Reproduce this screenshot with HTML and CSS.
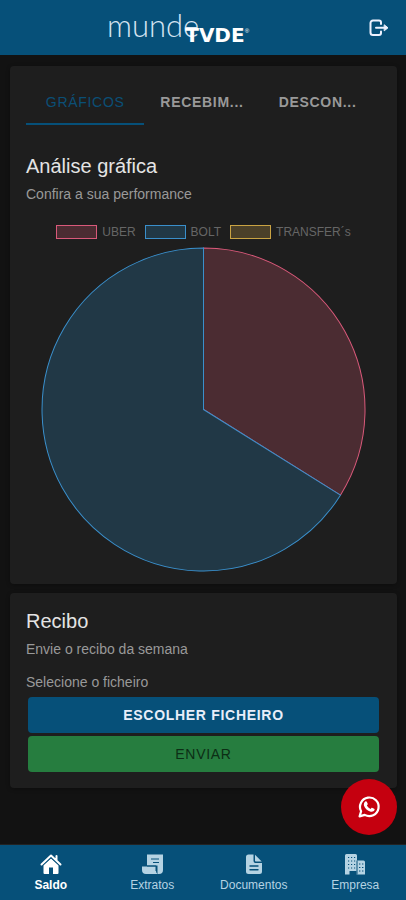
FILE: index.html
```html
<!DOCTYPE html>
<html lang="pt">
<head>
  <meta charset="UTF-8" />
  <meta name="viewport" content="width=device-width, initial-scale=1.0"/>
  <title>Saldo</title>
  <link rel="stylesheet" href="styles.css">
</head>
<body>
  <header class="header">
    <div class="logo"><span class="logo-thin">munde</span><span class="logo-bold">TVDE</span><span class="logo-reg">®</span></div>
    <button class="logout-btn" type="button" aria-label="Sair">
      <svg viewBox="0 0 22 20" width="22" height="20" fill="none" stroke="currentColor" stroke-width="2" stroke-linecap="round" stroke-linejoin="round">
        <path d="M13 6V4.500A2 2 0 0 0 11 2.500H5A2.500 2.500 0 0 0 2.500 5v9.500A2.500 2.500 0 0 0 5 17h6a2 2 0 0 0 2-2V13.500"/>
        <path d="M8 9.800H18"/>
        <path d="M16.500 7l3.500 2.800-3.500 2.800z" fill="currentColor" stroke-width="1"/>
      </svg>
    </button>
  </header>

  <main class="content">
    <section class="card card-chart">
      <div class="tabs" role="tablist">
        <button class="tab active" type="button" role="tab" aria-selected="true">GRÁFICOS</button>
        <button class="tab long" type="button" role="tab" aria-selected="false">RECEBIM...</button>
        <button class="tab long" type="button" role="tab" aria-selected="false">DESCON...</button>
      </div>
      <h2 class="card-title">Análise gráfica</h2>
      <p class="card-subtitle">Confira a sua performance</p>

      <ul class="legend">
        <li class="legend-item"><span class="swatch uber"></span>UBER</li>
        <li class="legend-item"><span class="swatch bolt"></span>BOLT</li>
        <li class="legend-item"><span class="swatch transfer"></span>TRANSFER´s</li>
      </ul>
      <div class="chart">
        <svg class="pie" viewBox="0 0 324 324">
          <path class="slice-uber" d="M162 162V1A161 161 0 0 1 298.500 247.400Z"/>
          <path class="slice-bolt" d="M162 162L298.500 247.400A161 161 0 1 1 162 1Z"/>
        </svg>
      </div>
    </section>

    <section class="card card-receipt">
      <h2 class="card-title">Recibo</h2>
      <p class="card-subtitle">Envie o recibo da semana</p>
      <label class="file-label" for="ficheiro">Selecione o ficheiro</label>
      <button class="btn choose-btn" type="button" id="ficheiro">ESCOLHER FICHEIRO</button>
      <button class="btn send-btn" type="button">ENVIAR</button>
    </section>
  </main>

  <button class="whatsapp-btn" type="button" aria-label="WhatsApp">
    <svg viewBox="0 0 24 24" width="24" height="24">
      <path d="M2.600 21.400l1.500-5.200A9.300 9.300 0 1 1 7.700 19.900z" fill="none" stroke="#fff" stroke-width="2.200" stroke-linejoin="round"/>
      <path d="M8.300 6.600c.5-.5 1.200-.4 1.500.2l.9 2c.2.400 0 .8-.8 1.700.8 1.600 2 2.700 3.700 3.500.7-.7 1-1.300 1.400-1.200l2.200 1c.5.300.5.700.3 1.300-.5 1.400-2.200 2-3.800 1.600-3.400-.9-5.600-3.100-6.700-5.900-.5-1.700.2-3.200 1.300-4.200z" fill="#fff"/>
    </svg>
  </button>

  <nav class="tab-bar">
    <a class="tab-link selected" href="#saldo">
      <svg viewBox="0 0 22 22" width="22" height="22" fill="currentColor">
        <path d="M11 5.500L3.500 12.200V20a1 1 0 0 0 1 1H9v-6.500h4V21h4.500a1 1 0 0 0 1-1v-7.800z"/>
        <path d="M1.500 11.500L11 2.500l9.500 9M16.500 7V3" fill="none" stroke="currentColor" stroke-width="2" stroke-linecap="round" stroke-linejoin="round"/>
        <path d="M3 12.300L11 5l8 7.300" fill="none" stroke="#065079" stroke-width="0.600"/>
      </svg>
      <span>Saldo</span>
    </a>
    <a class="tab-link" href="#extratos">
      <svg viewBox="0 0 22 22" width="22" height="22" fill="currentColor">
        <path d="M6 1.500h16V17a4 4 0 0 1-4 4h-1.500v-8.500H6z"/>
        <path d="M1 13.500h14V18a4 4 0 0 0 1.500 3H5a4 4 0 0 1-4-4z"/>
        <path d="M10 6h8M12 9.500h6M6 13h9v5" fill="none" stroke="#065079" stroke-width="1"/>
      </svg>
      <span>Extratos</span>
    </a>
    <a class="tab-link" href="#documentos">
      <svg viewBox="0 0 22 22" width="22" height="22" fill="currentColor">
        <path d="M10.500 1.500v6.500a2 2 0 0 0 2 2H19V18.500a2.500 2.500 0 0 1-2.500 2.500h-11A2.500 2.500 0 0 1 3 18.500V4a2.500 2.500 0 0 1 2.500-2.500z"/>
        <path d="M12 1.800v6c0 .4.300.700.700.700h6z"/>
        <path d="M7 13h8M7 16.800h8" stroke="#065079" stroke-width="1.400" stroke-linecap="round"/>
      </svg>
      <span>Documentos</span>
    </a>
    <a class="tab-link" href="#empresa">
      <svg viewBox="0 0 22 22" width="22" height="22" fill="currentColor">
        <path d="M2.500 1h9A1.500 1.500 0 0 1 13 2.500V7.500h6.500A1.500 1.500 0 0 1 21 9v12.500h-8.500V18h-7v3.500H1v-19A1.500 1.500 0 0 1 2.500 1z"/>
        <path d="M13 7.500v14M4 4.500h1.200M7 4.500h1.200M10 4.500h1.200M4 8h1.200M7 8h1.200M10 8h1.200M4 11.500h1.200M7 11.500h1.200M10 11.500h1.200M4 15h1.200M7 15h1.200M10 15h1.200M15 11h1.400M18 11h1.400M15 14.500h1.400M18 14.500h1.400M15 18h1.400M18 18h1.400" fill="none" stroke="#065079" stroke-width="1"/>
      </svg>
      <span>Empresa</span>
    </a>
  </nav>
</body>
</html>
```

FILE: styles.css
```css
body {
  margin: 0;
  min-height: 100vh;
  display: flex;
  flex-direction: column;
  background-color: #121212;
  color: #fff;
  font-family: "Liberation Sans", Arial, sans-serif;
}

button {
  border: none;
  padding: 0;
  font-family: inherit;
  cursor: pointer;
}

.header {
  display: flex;
  align-items: center;
  gap: 12px;
  height: 55px;
  padding-right: 16px;
  background-color: #065079;
}

.logo {
  flex: 1;
  display: flex;
  align-items: flex-end;
  justify-content: center;
}

.logo-thin {
  padding-bottom: 6px;
  color: #d5e4f2;
  font-family: Lato, sans-serif;
  font-size: 31px;
  font-weight: 300;
  line-height: 32px;
}

.logo-bold {
  margin-left: -14px;
  font-family: "DejaVu Sans", sans-serif;
  font-size: 20px;
  font-weight: bold;
  line-height: 24px;
}

.logo-reg {
  padding-bottom: 12px;
  font-size: 6px;
  line-height: 8px;
}

.logout-btn {
  display: flex;
  background: none;
  color: #eef2ff;
}

.content {
  flex: 1;
  display: flex;
  flex-direction: column;
  gap: 9px;
  padding: 11px 9px 11px 10px;
}

.card {
  padding: 16px;
  border-radius: 4px;
  background-color: #1e1e1e;
  box-shadow: 0 1px 4px rgba(0, 0, 0, 0.3);
}

.card-chart {
  padding-top: 12px;
  padding-bottom: 12px;
}

.tabs {
  display: flex;
  margin-bottom: 29px;
}

.tab {
  flex: 1;
  height: 47px;
  padding: 0 16px;
  border-top: 2px solid transparent;
  border-bottom: 2px solid transparent;
  background: none;
  color: #999;
  font-size: 14px;
  font-weight: bold;
  letter-spacing: 0.05em;
  white-space: nowrap;
}

.tab.long {
  text-align: left;
}

.tab.active {
  border-bottom-color: #065079;
  color: #0b4f76;
  font-weight: normal;
}

.card-title {
  margin: 0 0 6px;
  color: #e4e4e4;
  font-size: 20px;
  font-weight: normal;
  line-height: 24px;
}

.card-subtitle {
  margin: 0;
  color: #999;
  font-size: 14px;
  line-height: 20px;
}

.legend {
  display: flex;
  justify-content: center;
  gap: 9px;
  margin: 21px 0 8px;
  padding: 0;
  list-style: none;
  color: #666;
  font-size: 12px;
  line-height: 14px;
}

.legend-item {
  display: flex;
  align-items: center;
  gap: 5px;
}

.swatch {
  box-sizing: border-box;
  width: 41px;
  height: 14px;
  border: 1px solid;
}

.uber {
  border-color: #d9597a;
  background-color: #4b2c32;
}

.bolt {
  border-color: #3a8fcb;
  background-color: #213846;
}

.transfer {
  border-color: #c9a343;
  background-color: #4b4029;
}

.chart {
  padding: 0 15px;
}

.pie {
  display: block;
  width: 100%;
}

.slice-uber {
  fill: #4b2c32;
  stroke: #d9597a;
}

.slice-bolt {
  fill: #213846;
  stroke: #3a8fcb;
}

.card-receipt {
  display: flex;
  flex-direction: column;
}

.file-label {
  margin: 13px 0 3px;
  color: #999;
  font-size: 14px;
  line-height: 20px;
}

.btn {
  height: 36px;
  margin: 2px;
  border-radius: 4px;
  font-size: 14px;
  letter-spacing: 0.05em;
}

.choose-btn {
  background-color: #065079;
  color: #e8eefa;
  font-weight: bold;
}

.send-btn {
  margin-top: 1px;
  margin-bottom: 0;
  background-color: #267d3f;
  color: #0c2e15;
}

.whatsapp-btn {
  position: fixed;
  right: 9px;
  bottom: 65px;
  display: flex;
  align-items: center;
  justify-content: center;
  width: 56px;
  height: 56px;
  border-radius: 50%;
  background-color: #c5000f;
}

.tab-bar {
  position: sticky;
  bottom: 0;
  display: flex;
  box-sizing: border-box;
  height: 56px;
  border-top: 1px solid #222;
  background-color: #065079;
}

.tab-link {
  flex: 1;
  display: flex;
  flex-direction: column;
  align-items: center;
  justify-content: center;
  gap: 2px;
  color: #b5d3e3;
  font-size: 12px;
  line-height: 16px;
  text-decoration: none;
}

.tab-link.selected {
  color: #fff;
  font-weight: bold;
}
```
